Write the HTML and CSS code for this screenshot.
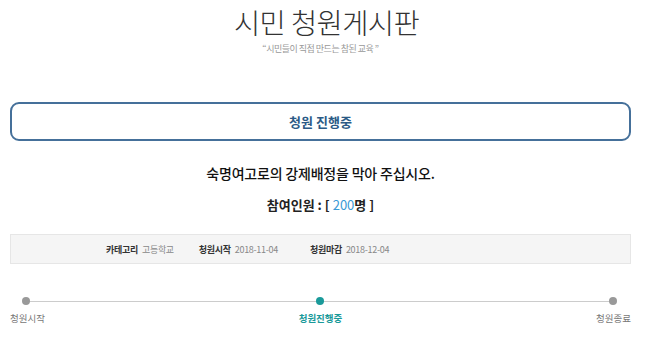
FILE: index.html
```html
<html>
<head>
<meta http-equiv="Content-Type" content="text/html; charset=utf-8">
<title>시민 청원게시판</title>
<link rel="stylesheet" href="styles.css">
</head>
<body>
<div id="wrap">
	<div class="head">
		<h1>시민 청원게시판</h1>
		<p class="sub">“시민들이 직접 만드는 참된 교육 ”</p>
	</div>
	<div class="state">청원 진행중</div>
	<h2 class="subject">숙명여고로의 강제배정을 막아 주십시오.</h2>
	<p class="count">참여인원 : [ <span>200</span>명 ]</p>
	<div class="info">
		<span class="item"><b>카테고리</b>고등학교</span>
		<span class="item"><b>청원시작</b>2018-11-04</span>
		<span class="item"><b>청원마감</b>2018-12-04</span>
	</div>
	<div class="steps">
		<div class="line"></div>
		<ul>
			<li class="first"><i></i><em>청원시작</em></li>
			<li class="on"><i></i><em>청원진행중</em></li>
			<li class="last"><i></i><em>청원종료</em></li>
		</ul>
	</div>
</div>
</body>
</html>
```

FILE: styles.css
```css
body{
	margin:0;
	background:#fff;
	font-family:"Noto Sans CJK KR","Noto Sans",sans-serif;
	color:#222;
}
#wrap{
	width:621px;
	margin-left:10px;
}
.head{
	text-align:center;
}
.head h1{
	margin:0;
	padding:4px 0 0 12px;
	font-size:28.5px;
	font-weight:300;
	line-height:36px;
	color:#333;
	letter-spacing:-0.6px;
}
.head .sub{
	margin:2px 0 0;
	font-size:9px;
	line-height:14px;
	color:#999;
	letter-spacing:-0.5px;
}
.state{
	margin-top:46px;
	height:35px;
	line-height:35px;
	border:2px solid #45709a;
	border-radius:9px;
	text-align:center;
	font-size:13px;
	font-weight:bold;
	color:#2b5a86;
}
.subject{
	margin:21px 0 0;
	text-align:center;
	font-size:14px;
	font-weight:500;
	line-height:22px;
	color:#111;
	letter-spacing:-0.2px;
}
.count{
	margin:11px 0 0;
	text-align:center;
	font-size:13px;
	font-weight:bold;
	line-height:20px;
	color:#222;
}
.count span{
	color:#3a9ad6;
	font-weight:normal;
}
.info{
	margin-top:19px;
	height:28px;
	background:#f5f5f5;
	border:1px solid #e6e6e6;
	display:flex;
	align-items:center;
	padding-left:95px;
	font-size:9px;
	color:#888;
	letter-spacing:-0.3px;
}
.info .item{
	margin-right:25px;
}
.info .item:nth-child(2){
	margin-right:32px;
}
.info b{
	color:#333;
	margin-right:4px;
}
.steps{
	position:relative;
	margin-top:29px;
}
.steps .line{
	position:absolute;
	left:16px;
	right:18px;
	top:8px;
	height:1px;
	background:#ccc;
}
.steps ul{
	list-style:none;
	margin:0;
	padding:0;
	display:flex;
	justify-content:space-between;
}
.steps li{
	display:flex;
	flex-direction:column;
	align-items:center;
	position:relative;
}
.steps li i{
	display:block;
	width:8px;
	height:8px;
	margin-top:4px;
	border-radius:50%;
	background:#999;
}
.steps li em{
	font-style:normal;
	font-size:9.5px;
	color:#777;
	margin-top:6px;
	line-height:14px;
}
.steps li.first{
	align-items:flex-start;
}
.steps li.first i{
	margin-left:12px;
}
.steps li.last{
	align-items:flex-end;
}
.steps li.last i{
	margin-right:14px;
}
.steps li.on i{
	background:#1a9a9a;
}
.steps li.on em{
	color:#1a9a9a;
	font-weight:bold;
}
```
